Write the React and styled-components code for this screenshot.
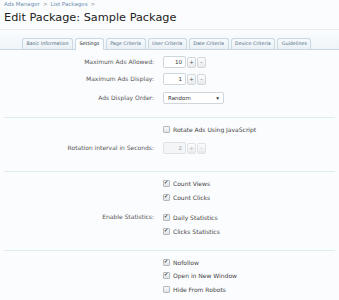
import React, { useState } from "react";
import styled, { createGlobalStyle } from "styled-components";

const GlobalStyle = createGlobalStyle`
	body {
		margin: 0;
		background: #fbfcfe;
		font-family: "DejaVu Sans", Tahoma, sans-serif;
		color: #444;
	}
`;

const Page = styled.div`
	width: 339px;
	height: 300px;
	overflow: hidden;
	background: #fbfcfe;
`;

const Header = styled.div`
	padding: 1px 4px 0;
`;

const Breadcrumb = styled.div`
	font-size: 5.5px;
	color: #6d8fad;
	line-height: 7px;
	span { margin: 0 3px; color: #999; }
`;

const Title = styled.h1`
	margin: 1px 0 0;
	font-family: "DejaVu Sans", Tahoma, sans-serif;
	font-weight: normal;
	font-size: 11.3px;
	line-height: 17px;
	color: #222;
`;

const TabStrip = styled.div`
	margin-top: 3px;
	padding: 8px 0 0 22px;
	border-top: 1px solid #e6eef3;
	border-bottom: 1px solid #c9d8e2;
	background: linear-gradient(#fbfdfe, #eef4f8);
	display: flex;
	gap: 2px;
`;

const Tab = styled.div`
	height: 10px;
	padding: 0 3.5px;
	font-size: 4.8px;
	line-height: 10px;
	color: ${p => (p.$active ? "#222" : "#4f6c84")};
	border: 1px solid #c9d8e2;
	border-bottom: none;
	border-radius: 3px 3px 0 0;
	background: ${p => (p.$active ? "#fbfcfe" : "linear-gradient(#f7fafc, #e9f0f5)")};
	margin-bottom: ${p => (p.$active ? "-1px" : "0")};
	padding-bottom: ${p => (p.$active ? "1px" : "0")};
	white-space: nowrap;
`;

const Section = styled.div`
	margin: 0 4px;
	padding: ${p => p.$pad};
	border-bottom: ${p => (p.$last ? "none" : "1px solid #dcecf0")};
	display: flex;
	flex-direction: column;
	gap: ${p => p.$gap || "0"};
`;

const Unit = styled.div`
	display: grid;
	grid-template-columns: 150px 1fr;
	column-gap: 9px;
	align-items: center;
	min-height: ${p => p.$h || "12px"};
	margin-top: ${p => p.$mt || "0"};
`;

const Label = styled.div`
	text-align: right;
	font-size: 6px;
	line-height: 10px;
	color: #555;
	white-space: nowrap;
	align-self: ${p => p.$self || "center"};
`;

const Controls = styled.div`
	display: flex;
	flex-direction: column;
	gap: ${p => p.$gap || "4px"};
`;

const Spin = styled.div`
	display: flex;
	align-items: center;
	gap: 1px;
`;

const NumBox = styled.div`
	width: 18px;
	height: 10px;
	border: 1px solid ${p => (p.$disabled ? "#dde3e8" : "#cfd6dc")};
	border-radius: 2px;
	background: ${p => (p.$disabled ? "#f3f5f7" : "#fff")};
	font-size: 5.5px;
	line-height: 10px;
	text-align: right;
	padding-right: 3px;
	color: ${p => (p.$disabled ? "#999" : "#333")};
`;

const SpinButton = styled.div`
	width: 7px;
	height: 9px;
	border: 1px solid ${p => (p.$disabled ? "#e0e4e8" : "#d3d8dd")};
	border-radius: 2px;
	background: linear-gradient(#fdfdfd, #e7eaed);
	font-size: 5.5px;
	line-height: 9px;
	text-align: center;
	color: ${p => (p.$disabled ? "#bbb" : "#555")};
`;

const Select = styled.div`
	width: 51px;
	height: 10px;
	padding: 0 4px;
	border: 1px solid #cfd6dc;
	border-radius: 2px;
	background: #fff;
	display: flex;
	justify-content: space-between;
	align-items: center;
	font-size: 5.5px;
	color: #333;
`;

const Check = styled.label`
	display: flex;
	align-items: center;
	gap: 3px;
	height: 10px;
	font-size: 6px;
	color: #444;
	white-space: nowrap;
`;

const Box = styled.span`
	width: 5px;
	height: 5px;
	border: 1px solid #b3b9be;
	border-radius: 1px;
	background: linear-gradient(#fafafa, #e0e3e6);
	position: relative;
	flex: none;
	&::after {
		content: ${p => (p.$checked ? '"✔"' : '""')};
		position: absolute;
		left: 0;
		top: -2px;
		font-size: 5px;
		color: #444;
	}
`;

const CheckItem = ({ label, checked }) => (
	<Check>
		<Box $checked={checked} />
		{label}
	</Check>
);

const SpinBox = ({ value, disabled }) => (
	<Spin>
		<NumBox $disabled={disabled}>{value}</NumBox>
		<SpinButton $disabled={disabled}>+</SpinButton>
		<SpinButton $disabled={disabled}>-</SpinButton>
	</Spin>
);

const tabs = [
	"Basic Information",
	"Settings",
	"Page Criteria",
	"User Criteria",
	"Date Criteria",
	"Device Criteria",
	"Guidelines",
];

const App = () => {
	const [activeTab] = useState("Settings");

	return (
		<Page>
			<GlobalStyle />
			<Header>
				<Breadcrumb>
					Ads Manager<span>&gt;</span>List Packages<span>&gt;</span>
				</Breadcrumb>
				<Title>Edit Package: Sample Package</Title>
			</Header>
			<TabStrip>
				{tabs.map(t => (
					<Tab key={t} $active={t === activeTab}>{t}</Tab>
				))}
			</TabStrip>

			<Section $pad="6px 0 13px" $gap="5px">
				<Unit>
					<Label>Maximum Ads Allowed:</Label>
					<SpinBox value="10" />
				</Unit>
				<Unit>
					<Label>Maximum Ads Display:</Label>
					<SpinBox value="1" />
				</Unit>
				<Unit $mt="2px">
					<Label>Ads Display Order:</Label>
					<div>
						<Select>Random<span>▾</span></Select>
					</div>
				</Unit>
			</Section>

			<Section $pad="6px 0 17px" $gap="8px">
				<Unit $h="10px">
					<span />
					<CheckItem label="Rotate Ads Using JavaScript" />
				</Unit>
				<Unit>
					<Label>Rotation interval in Seconds:</Label>
					<SpinBox value="2" disabled />
				</Unit>
			</Section>

			<Section $pad="6px 0 14px" $gap="10px">
				<Unit $h="10px">
					<span />
					<Controls>
						<CheckItem label="Count Views" checked />
						<CheckItem label="Count Clicks" checked />
					</Controls>
				</Unit>
				<Unit $h="10px">
					<Label $self="start">Enable Statistics:</Label>
					<Controls>
						<CheckItem label="Daily Statistics" checked />
						<CheckItem label="Clicks Statistics" checked />
					</Controls>
				</Unit>
			</Section>

			<Section $pad="6px 0 0" $last>
				<Unit $h="10px">
					<span />
					<Controls $gap="3.5px">
						<CheckItem label="Nofollow" checked />
						<CheckItem label="Open in New Window" checked />
						<CheckItem label="Hide From Robots" />
					</Controls>
				</Unit>
			</Section>
		</Page>
	);
};

export default App;
